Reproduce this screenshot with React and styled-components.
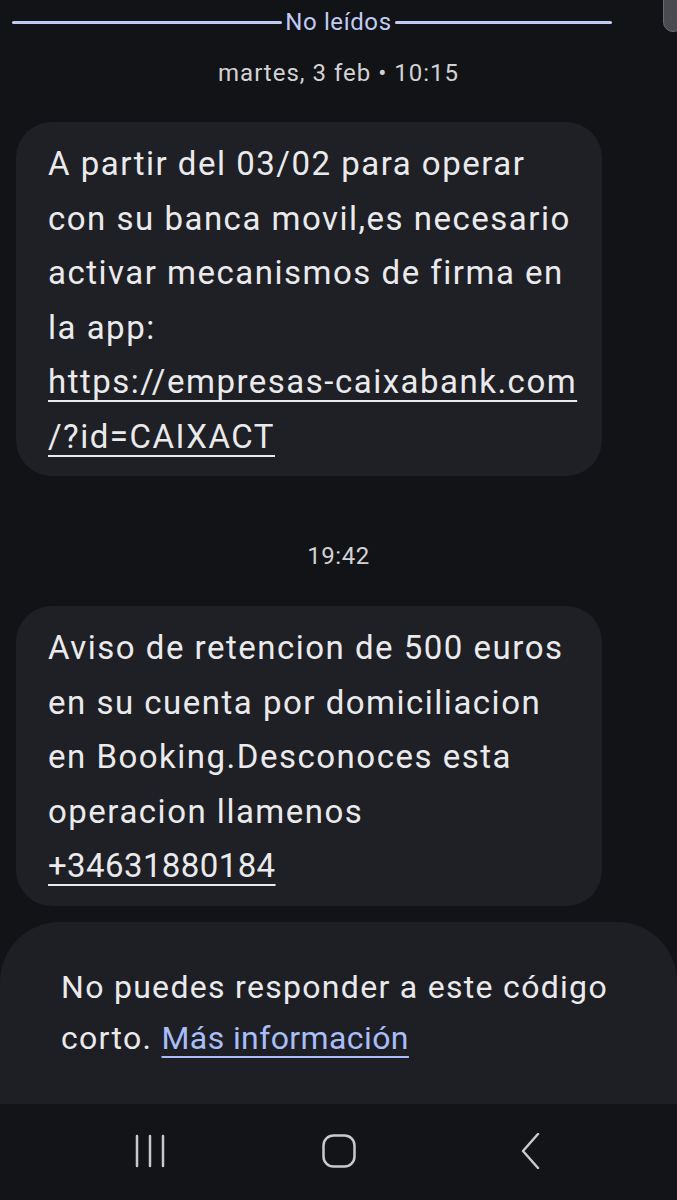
import React from "react";
import styled, { createGlobalStyle } from "styled-components";

const GlobalStyle = createGlobalStyle`
  html, body {
    margin: 0;
    padding: 0;
    background: #121317;
  }
  * {
    box-sizing: border-box;
  }
`;

// Page shell
const Screen = styled.div`
  position: relative;
  width: 677px;
  height: 1200px;
  overflow: hidden;
  display: flex;
  flex-direction: column;
  background: #121317;
  font-family: Roboto, "Noto Sans", sans-serif;
  color: #eaeaec;
`;

const ScrollThumb = styled.div`
  position: absolute;
  top: -20px;
  right: -6px;
  width: 20px;
  height: 52px;
  border-radius: 10px;
  background: #4a4b50;
  border: 1px solid #6a6b70;
`;

// label sits at the page centre, the two rules fill what is left
const Divider = styled.div`
  height: 44px;
  display: grid;
  grid-template-columns: 1fr auto 1fr;
  align-items: center;
  column-gap: 3px;
`;

const DividerLine = styled.div`
  height: 3px;
  border-radius: 2px;
  background: #c0cbf4;
  margin: ${({ $side }) => ($side === "left" ? "0 0 0 12px" : "0 65px 0 0")};
`;

const DividerLabel = styled.span`
  font-size: 24px;
  letter-spacing: 0.6px;
  color: #c0cbf4;
  line-height: 44px;
`;

const Stamp = styled.div`
  text-align: center;
  font-size: 24px;
  letter-spacing: ${({ $spacing }) => $spacing}px;
  line-height: 30px;
  color: #d2d2d4;
  margin-top: ${({ $top }) => $top}px;
  margin-bottom: ${({ $bottom }) => $bottom}px;
`;

const Bubble = styled.div`
  width: 586px;
  margin-left: 16px;
  background: #1f2025;
  border-radius: 36px;
  padding: 15px 10px 12px 32px;
  font-size: 33px;
  letter-spacing: 1.5px;
  line-height: 54.5px;
  white-space: nowrap;
`;

const Link = styled.span`
  text-decoration: underline;
  text-decoration-thickness: 2px;
  text-underline-offset: 7px;
  letter-spacing: ${({ $tight }) => ($tight ? "0.4px" : "inherit")};
  color: ${({ $blue }) => ($blue ? "#a9bef8" : "inherit")};
`;

const Footer = styled.div`
  margin-top: 16px;
  height: 182px;
  background: #1e1f24;
  border-radius: 60px 60px 0 0;
  padding: 40px 10px 0 61px;
  font-size: 32px;
  letter-spacing: 1.3px;
  line-height: 51px;
  white-space: nowrap;
`;

const NavBar = styled.div`
  flex: 1;
  background: #131418;
  display: grid;
  grid-template-columns: repeat(3, 190px);
  justify-content: center;
  align-items: center;
  justify-items: center;
  padding-bottom: 2px;
`;

const NavIcon = styled.svg`
  width: 36px;
  height: 36px;
  stroke: #c9c9cc;
  fill: none;
  stroke-width: 2.5;
  stroke-linecap: round;
  stroke-linejoin: round;
`;

const messages = [
  {
    id: 1,
    lines: [
      "A partir del 03/02 para operar",
      "con su banca movil,es necesario",
      "activar mecanismos de firma en",
      "la app:",
    ],
    links: ["https://empresas-caixabank.com", "/?id=CAIXACT"],
  },
  {
    id: 2,
    lines: [
      "Aviso de retencion de 500 euros",
      "en su cuenta por domiciliacion",
      "en Booking.Desconoces esta",
      "operacion llamenos",
    ],
    links: ["+34631880184"],
    tight: true,
  },
];

function MessageBubble({ lines, links, tight }) {
  return (
    <Bubble>
      {lines.map((l) => (
        <div key={l}>{l}</div>
      ))}
      {links.map((l) => (
        <div key={l}>
          <Link $tight={tight}>{l}</Link>
        </div>
      ))}
    </Bubble>
  );
}

export default function App() {
  return (
    <>
      <GlobalStyle />
      <Screen>
        <ScrollThumb />
        <Divider>
          <DividerLine $side="left" />
          <DividerLabel>No leídos</DividerLabel>
          <DividerLine $side="right" />
        </Divider>
        <Stamp $top={14} $bottom={34} $spacing={1}>
          martes, 3 feb • 10:15
        </Stamp>
        <MessageBubble {...messages[0]} />
        <Stamp $top={65} $bottom={35} $spacing={0.5}>
          19:42
        </Stamp>
        <MessageBubble {...messages[1]} />
        <Footer>
          No puedes responder a este código
          <br />
          corto. <Link $blue $tight>Más información</Link>
        </Footer>
        <NavBar>
          <NavIcon viewBox="0 0 36 36">
            <path d="M6 3v30M19 3v30M32 3v30" />
          </NavIcon>
          <NavIcon viewBox="0 0 36 36">
            <rect x="2.5" y="2.5" width="31" height="31" rx="10" />
          </NavIcon>
          <NavIcon viewBox="0 0 36 36">
            <path d="M27 1L12 18l15 17" />
          </NavIcon>
        </NavBar>
      </Screen>
    </>
  );
}
